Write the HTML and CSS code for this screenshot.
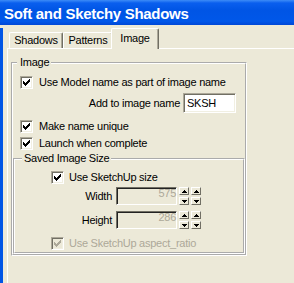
FILE: index.html
```html
<!DOCTYPE html>
<html>
<head>
<meta charset="utf-8">
<link rel="stylesheet" href="styles.css">
</head>
<body>
<div class="window">
  <div class="titlebar">Soft and Sketchy Shadows</div>
  <div class="frame">
    <div class="tabs">
      <div class="tab t-shadows">Shadows</div>
      <div class="tab t-patterns">Patterns</div>
      <div class="tab active">Image</div>
    </div>
    <div class="panel">
      <fieldset class="group outer">
        <legend>Image</legend>
        <div class="row check-row r1">
          <span class="cb"><svg width="7" height="7" viewBox="0 0 7 7"><path d="M6 0h1v1h-1z M5 1h2v1h-2z M0 2h1v1h-1z M4 2h3v1h-3z M0 3h2v1h-2z M3 3h3v1h-3z M0 4h5v1h-5z M1 5h3v1h-3z M2 6h1v1h-1z"/></svg></span>
          <span>Use Model name as part of image name</span>
        </div>
        <div class="row name-row">
          <span>Add to image name</span>
          <span class="textbox">SKSH</span>
        </div>
        <div class="row check-row r3">
          <span class="cb"><svg width="7" height="7" viewBox="0 0 7 7"><path d="M6 0h1v1h-1z M5 1h2v1h-2z M0 2h1v1h-1z M4 2h3v1h-3z M0 3h2v1h-2z M3 3h3v1h-3z M0 4h5v1h-5z M1 5h3v1h-3z M2 6h1v1h-1z"/></svg></span>
          <span>Make name unique</span>
        </div>
        <div class="row check-row">
          <span class="cb"><svg width="7" height="7" viewBox="0 0 7 7"><path d="M6 0h1v1h-1z M5 1h2v1h-2z M0 2h1v1h-1z M4 2h3v1h-3z M0 3h2v1h-2z M3 3h3v1h-3z M0 4h5v1h-5z M1 5h3v1h-3z M2 6h1v1h-1z"/></svg></span>
          <span>Launch when complete</span>
        </div>
        <fieldset class="group inner">
          <legend>Saved Image Size</legend>
          <div class="row check-row inner-check su-row">
            <span class="cb"><svg width="7" height="7" viewBox="0 0 7 7"><path d="M6 0h1v1h-1z M5 1h2v1h-2z M0 2h1v1h-1z M4 2h3v1h-3z M0 3h2v1h-2z M3 3h3v1h-3z M0 4h5v1h-5z M1 5h3v1h-3z M2 6h1v1h-1z"/></svg></span>
            <span>Use SketchUp size</span>
          </div>
          <div class="row num-row w-row">
            <span class="num-label">Width</span>
            <span class="numbox">575</span>
            <span class="spin">
              <span class="sb"><svg width="5" height="3" viewBox="0 0 5 3"><path d="M2 0h1v1h-1z M1 1h3v1h-3z M0 2h5v1h-5z"/></svg></span>
              <span class="sb"><svg width="5" height="3" viewBox="0 0 5 3"><path d="M2 0h1v1h-1z M1 1h3v1h-3z M0 2h5v1h-5z"/></svg></span>
              <span class="sb"><svg width="5" height="3" viewBox="0 0 5 3"><path d="M0 0h5v1h-5z M1 1h3v1h-3z M2 2h1v1h-1z"/></svg></span>
              <span class="sb"><svg width="5" height="3" viewBox="0 0 5 3"><path d="M0 0h5v1h-5z M1 1h3v1h-3z M2 2h1v1h-1z"/></svg></span>
            </span>
          </div>
          <div class="row num-row h-row">
            <span class="num-label">Height</span>
            <span class="numbox">286</span>
            <span class="spin">
              <span class="sb"><svg width="5" height="3" viewBox="0 0 5 3"><path d="M2 0h1v1h-1z M1 1h3v1h-3z M0 2h5v1h-5z"/></svg></span>
              <span class="sb"><svg width="5" height="3" viewBox="0 0 5 3"><path d="M2 0h1v1h-1z M1 1h3v1h-3z M0 2h5v1h-5z"/></svg></span>
              <span class="sb"><svg width="5" height="3" viewBox="0 0 5 3"><path d="M0 0h5v1h-5z M1 1h3v1h-3z M2 2h1v1h-1z"/></svg></span>
              <span class="sb"><svg width="5" height="3" viewBox="0 0 5 3"><path d="M0 0h5v1h-5z M1 1h3v1h-3z M2 2h1v1h-1z"/></svg></span>
            </span>
          </div>
          <div class="row check-row inner-check ar-row disabled">
            <span class="cb"><svg width="7" height="7" viewBox="0 0 7 7"><path d="M6 0h1v1h-1z M5 1h2v1h-2z M0 2h1v1h-1z M4 2h3v1h-3z M0 3h2v1h-2z M3 3h3v1h-3z M0 4h5v1h-5z M1 5h3v1h-3z M2 6h1v1h-1z"/></svg></span>
            <span>Use SketchUp aspect_ratio</span>
          </div>
        </fieldset>
      </fieldset>
    </div>
  </div>
</div>
</body>
</html>
```

FILE: styles.css
```css
html, body {
  margin: 0;
  padding: 0;
  background: #ECE9D8;
}
body {
  font-family: "Liberation Sans", Arial, sans-serif;
  font-size: 11px;
  line-height: 13px;
  letter-spacing: -0.25px;
  color: #000;
}
.window {
  width: 294px;
  height: 283px;
  overflow: hidden;
  background: #ECE9D8;
}
.titlebar {
  height: 25px;
  box-sizing: border-box;
  padding: 2px 0 0 4px;
  line-height: 23px;
  font-size: 15px;
  font-weight: bold;
  letter-spacing: -0.3px;
  color: #fff;
  white-space: nowrap;
  background: linear-gradient(to bottom, #3D8CF7 0, #0A5FEE 3px, #0055E5 40%, #0057E9 85%, #0047D6 100%);
}
.frame {
  height: 258px;
  box-sizing: border-box;
  border-left: 3px solid #0055E5;
}
.tabs {
  display: flex;
  align-items: flex-end;
  height: 20px;
  margin: 3px 0 0 6px;
}
.tab {
  box-sizing: border-box;
  height: 16px;
  padding-top: 1px;
  border-top: 1px solid #fff;
  border-left: 1px solid #fff;
  border-right: 1px solid #716F64;
  box-shadow: inset -1px 0 0 #ACA899;
  border-radius: 2px 2px 0 0;
  text-align: center;
  background: #ECE9D8;
}
.t-shadows { width: 54px; }
.t-patterns { width: 50px; }
.tab.active {
  width: 48px;
  height: 21px;
  padding-top: 3px;
  margin-left: -2px;
  margin-bottom: -1px;
  position: relative;
  z-index: 1;
}
.panel {
  margin-left: 4px;
  border-top: 1px solid #fff;
  border-left: 1px solid #fff;
  padding: 7px 0 0 3px;
  height: 240px;
}
fieldset.group {
  margin: 0;
  padding: 0;
  min-width: 0;
  box-sizing: border-box;
  border: 2px groove #fff;
}
legend {
  line-height: 13px;
  padding: 0 2px 0 3px;
  margin-left: 4px;
}
.outer {
  width: 236px;
  padding-bottom: 5px;
}
.inner {
  margin: 6px 3px 0 1px;
  padding-bottom: 2px;
}
.inner legend {
  margin-left: 7px;
  padding: 0 2px;
}
.row {
  display: flex;
  align-items: center;
  height: 17px;
  white-space: nowrap;
}
.check-row {
  padding-left: 7px;
  gap: 6px;
}
.r1 { margin-top: 5px; }
.name-row {
  height: 20px;
  margin-top: 2px;
  justify-content: flex-end;
  padding-right: 9px;
  gap: 3px;
}
.r3 { margin-top: 5px; }
.inner-check {
  padding-left: 36px;
  gap: 5px;
}
.su-row { margin-top: 4px; }
.num-row { height: 18px; }
.w-row { margin-top: 1px; }
.h-row { margin-top: 6px; }
.ar-row { margin-top: 6px; }

.cb {
  box-sizing: border-box;
  width: 13px;
  height: 13px;
  flex: none;
  padding: 2px;
  border: 1px solid;
  border-color: #ACA899 #fff #fff #ACA899;
  box-shadow: inset 1px 1px 0 #716F64, inset -1px -1px 0 #F1EFE2;
  background: #fff;
  display: flex;
}
.cb svg { display: block; fill: #000; }
.disabled { color: #ACA899; }
.disabled .cb { background: #ECE9D8; }
.disabled .cb svg { fill: #ACA899; }

.textbox {
  box-sizing: border-box;
  width: 53px;
  height: 20px;
  padding-left: 3px;
  line-height: 18px;
  background: #fff;
  border: 1px solid;
  border-color: #ACA899 #fff #fff #ACA899;
  box-shadow: inset 1px 1px 0 #716F64, inset -1px -1px 0 #F1EFE2;
}
.num-label {
  width: 97px;
  margin-right: 4px;
  text-align: right;
  flex: none;
}
.numbox {
  box-sizing: border-box;
  width: 61px;
  height: 18px;
  flex: none;
  text-align: right;
  color: #ACA899;
  line-height: 10px;
  border: 1px solid;
  border-color: #716F64 #fff #fff #716F64;
  box-shadow: inset 1px 1px 0 #222;
  align-self: stretch;
}
.spin {
  display: grid;
  grid-template-columns: 10px 10px;
  grid-template-rows: 8px 8px;
  column-gap: 2px;
  row-gap: 2px;
  margin-left: 2px;
}
.sb {
  box-sizing: border-box;
  border-top: 1px solid #fff;
  border-left: 1px solid #fff;
  border-right: 1px solid #716F64;
  border-bottom: 1px solid #716F64;
  background: #ECE9D8;
  display: flex;
  align-items: center;
  justify-content: center;
}
.sb svg { display: block; fill: #000; }
```
